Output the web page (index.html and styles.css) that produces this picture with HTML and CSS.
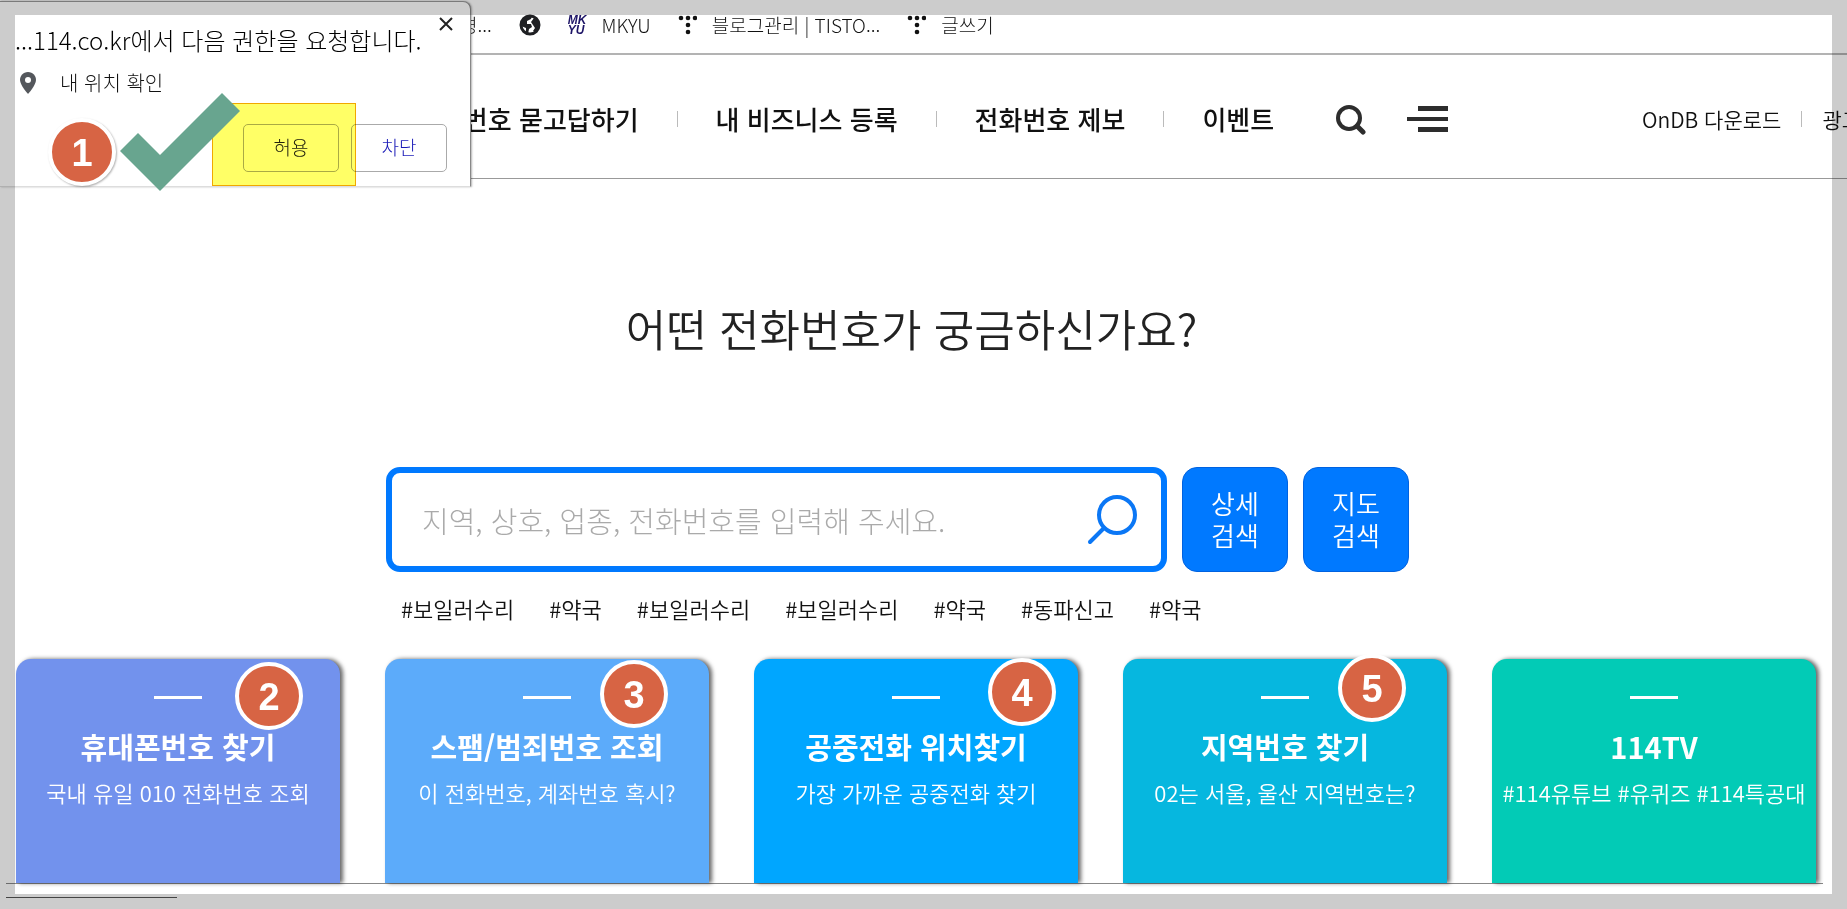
FILE: index.html
```html
<!DOCTYPE html>
<html lang="ko">
<head>
    <meta charset="UTF-8">
    <meta name="viewport" content="width=device-width, initial-scale=1.0">
    <title>114 전화번호 안내</title>
    <link rel="stylesheet" href="styles.css">
</head>
<body>
    <div class="page">
        <!-- Bookmarks -->
        <div class="bookmarks">
            <a class="bookmark" href="#">경...</a>
            <a class="bookmark" href="#" aria-label="웹사이트">
                <svg width="22" height="22" viewBox="0 0 22 22">
                    <circle cx="11" cy="11" r="9" fill="#fff" stroke="#1f2023" stroke-width="3"/>
                    <path d="M2 8 L6 3 L13 2 L12 5 L8 7 L8 10 L12 10 L13 13 L10 15 L9 20 L7 19 L7 14 L2 12 Z" fill="#1f2023"/>
                    <path d="M15 4 L20 8 L20 14 L16 18 L14 17 L16 14 L14 11 L12 8 Z" fill="#1f2023"/>
                </svg>
            </a>
            <a class="bookmark" href="#">
                <span class="mk-logo">MK<br>YU</span>
                MKYU
            </a>
            <a class="bookmark" href="#">
                <svg class="dots" width="19" height="22" viewBox="0 0 19 22">
                    <circle cx="3" cy="4" r="2.3"/><circle cx="10" cy="4" r="2.3"/><circle cx="17" cy="4" r="2.3"/>
                    <circle cx="10" cy="11" r="2.3"/><circle cx="10" cy="18" r="2.3"/>
                </svg>
                블로그관리 | TISTO...
            </a>
            <a class="bookmark" href="#">
                <svg class="dots" width="19" height="22" viewBox="0 0 19 22">
                    <circle cx="3" cy="4" r="2.3"/><circle cx="10" cy="4" r="2.3"/><circle cx="17" cy="4" r="2.3"/>
                    <circle cx="10" cy="11" r="2.3"/><circle cx="10" cy="18" r="2.3"/>
                </svg>
                글쓰기
            </a>
        </div>

        <!-- Header -->
        <header class="header">
            <nav class="nav">
                <a href="#">전화번호 묻고답하기</a>
                <span class="bar"></span>
                <a href="#">내 비즈니스 등록</a>
                <span class="bar"></span>
                <a href="#">전화번호 제보</a>
                <span class="bar"></span>
                <a href="#">이벤트</a>
            </nav>
            <div class="header-icons">
                <button class="icon-btn" type="button" aria-label="검색">
                    <svg width="32" height="32" viewBox="0 0 32 32" fill="none" stroke="#2d2d2d">
                        <circle cx="14" cy="15" r="11" stroke-width="4"/>
                        <path d="M22 23 L28 29" stroke-width="5" stroke-linecap="round"/>
                    </svg>
                </button>
                <button class="icon-btn" type="button" aria-label="전체메뉴">
                    <svg width="41" height="26" viewBox="0 0 41 26" fill="#2d2d2d">
                        <rect x="11" y="0" width="30" height="5"/>
                        <rect x="0" y="11" width="41" height="4"/>
                        <rect x="11" y="21" width="30" height="5"/>
                    </svg>
                </button>
            </div>
            <div class="util">
                <a href="#">OnDB 다운로드</a>
                <span class="bar"></span>
                <a href="#">광고</a>
            </div>
        </header>

        <!-- Search -->
        <main class="main">
            <h1 class="title">어떤 전화번호가 궁금하신가요?</h1>
            <div class="search">
                <form class="search-row">
                    <div class="search-box">
                        <input class="search-input" type="text" aria-label="검색어" placeholder="지역, 상호, 업종, 전화번호를 입력해 주세요.">
                        <button class="icon-btn" type="button" aria-label="검색">
                            <svg width="51" height="54" viewBox="0 0 51 54" fill="none" stroke="#0b77f5" stroke-width="4" stroke-linecap="round">
                                <circle cx="30" cy="22" r="18"/>
                                <path d="M17 35 L3 49"/>
                            </svg>
                        </button>
                    </div>
                    <button class="search-btn" type="button">상세<br>검색</button>
                    <button class="search-btn" type="button">지도<br>검색</button>
                </form>
                <div class="tags">
                    <a href="#">#보일러수리</a>
                    <a href="#">#약국</a>
                    <a href="#">#보일러수리</a>
                    <a href="#">#보일러수리</a>
                    <a href="#">#약국</a>
                    <a href="#">#동파신고</a>
                    <a href="#">#약국</a>
                </div>
            </div>
        </main>

        <!-- Service cards -->
        <section class="cards">
            <a class="card card-phone" href="#">
                <h2>휴대폰번호 찾기</h2>
                <p>국내 유일 010 전화번호 조회</p>
                <span class="badge">2</span>
            </a>
            <a class="card card-spam" href="#">
                <h2>스팸/범죄번호 조회</h2>
                <p>이 전화번호, 계좌번호 혹시?</p>
                <span class="badge">3</span>
            </a>
            <a class="card card-booth" href="#">
                <h2>공중전화 위치찾기</h2>
                <p>가장 가까운 공중전화 찾기</p>
                <span class="badge">4</span>
            </a>
            <a class="card card-area" href="#">
                <h2>지역번호 찾기</h2>
                <p>02는 서울, 울산 지역번호는?</p>
                <span class="badge">5</span>
            </a>
            <a class="card card-tv" href="#">
                <h2>114TV</h2>
                <p>#114유튜브 #유퀴즈 #114특공대</p>
            </a>
        </section>
        <div class="bottom-lines"></div>

        <!-- Permission popup -->
        <div class="popup">
            <button class="popup-close" type="button" aria-label="닫기">
                <svg width="14" height="14" viewBox="0 0 14 14" stroke="#222" stroke-width="2">
                    <path d="M1 1 L13 13 M13 1 L1 13"/>
                </svg>
            </button>
            <p class="popup-title">...114.co.kr에서 다음 권한을 요청합니다.</p>
            <p class="popup-item">
                <svg width="16" height="22" viewBox="0 0 16 22">
                    <path d="M8 0 C3 0 0 4 0 8 C0 13 8 22 8 22 C8 22 16 13 16 8 C16 4 13 0 8 0 Z" fill="#54575c"/>
                    <circle cx="8" cy="8" r="3" fill="#fff"/>
                </svg>
                내 위치 확인
            </p>
            <div class="popup-buttons">
                <button class="popup-btn" type="button">허용</button>
                <button class="popup-btn popup-block" type="button">차단</button>
            </div>
        </div>

        <!-- Guide marks -->
        <div class="highlight"></div>
        <svg class="check" width="120" height="98" viewBox="0 0 120 98">
            <polygon points="0,58 18,40 40,62 102,0 120,18 40,98" fill="#68a58f"/>
        </svg>
        <div class="frame"></div>
        <span class="badge badge-first">1</span>
    </div>
</body>
</html>
```
FILE: styles.css
```css
* {
    box-sizing: border-box;
}

body {
    margin: 0;
    font-family: "Noto Sans CJK KR", sans-serif;
    color: #111;
    background: #fff;
}

a {
    color: inherit;
    text-decoration: none;
}

h1, h2, p {
    margin: 0;
}

button {
    font-family: inherit;
    padding: 0;
    cursor: pointer;
}

.page {
    position: relative;
    min-height: 100vh;
    overflow: hidden;
}

/* grey see-through frame round the page */
.frame {
    position: absolute;
    inset: 0;
    border: 15px solid rgba(0, 0, 0, 0.2);
    pointer-events: none;
}

/* Bookmarks */
.bookmarks {
    display: flex;
    gap: 27px;
    height: 55px;
    padding: 11px 0 0 460px;
    border-bottom: 2px solid #b3b3b3;
    white-space: nowrap;
}

.bookmark {
    display: flex;
    align-items: center;
    gap: 15px;
    height: 27px;
    font-size: 19px;
    font-weight: 300;
}

.dots {
    fill: #111;
}

.mk-logo {
    font: italic bold 12px/10px "Liberation Sans", sans-serif;
    color: #1d1466;
}

/* Header */
.header {
    display: flex;
    align-items: center;
    height: 124px;
    padding: 5px 0 0 416px;
    border-bottom: 1px solid #999;
    white-space: nowrap;
}

.nav {
    display: flex;
    align-items: center;
    gap: 38px;
    font-size: 26px;
    font-weight: 500;
    line-height: 40px;
}

.bar {
    flex-shrink: 0;
    width: 1px;
    height: 16px;
    background: #bbb;
}

.header-icons {
    display: flex;
    align-items: center;
    gap: 40px;
    margin-left: 61px;
}

.icon-btn {
    display: flex;
    border: 0;
    background: none;
}

.util {
    display: flex;
    align-items: center;
    gap: 20px;
    width: 205px;
    margin-left: auto;
    font-size: 21px;
    font-weight: 350;
}

.util a {
    flex-shrink: 0;
}

/* Search */
.main {
    padding: 119px 24px 0 0;
}

.title {
    font-size: 44px;
    font-weight: 350;
    line-height: 60px;
    text-align: center;
    color: #222;
}

.search {
    width: 1051px;
    margin: 109px auto 0;
    padding-right: 28px;
}

.search-row {
    display: flex;
    gap: 15px;
    height: 105px;
}

.search-box {
    display: flex;
    flex: 1;
    align-items: center;
    padding: 0 23px 0 30px;
    border: 6px solid #0079ff;
    border-radius: 14px;
}

.search-input {
    flex: 1;
    min-width: 0;
    padding: 0;
    border: 0;
    outline: 0;
    background: none;
    font-family: inherit;
    font-size: 29px;
    font-weight: 300;
}

.search-input::placeholder {
    color: #aaa;
}

.search-btn {
    width: 106px;
    padding-bottom: 2px;
    border: 1px solid #0062e0;
    border-radius: 15px;
    background: #0079ff;
    color: #fff;
    font-size: 26px;
    font-weight: 350;
    line-height: 32px;
}

.tags {
    display: flex;
    gap: 35px;
    padding: 21px 15px 0;
    font-size: 22px;
    font-weight: 350;
    line-height: 30px;
    white-space: nowrap;
}

/* Cards */
.cards {
    display: grid;
    grid-template-columns: repeat(5, 1fr);
    gap: 45px;
    margin-top: 36px;
    padding: 0 31px 0 16px;
}

.card {
    position: relative;
    height: 224px;
    padding-top: 37px;
    border-radius: 15px 15px 0 0;
    box-shadow: 3px 0 4px rgba(0, 0, 0, 0.6);
    color: #fff;
    text-align: center;
    white-space: nowrap;
}

.card::before {
    content: "";
    display: block;
    width: 48px;
    height: 3px;
    margin: 0 auto 24px;
    background: #fff;
}

.card h2 {
    font-size: 29px;
    font-weight: 700;
    line-height: 46px;
}

.card p {
    font-size: 22px;
    font-weight: 350;
    line-height: 47px;
}

.card-phone {
    background: #7292ed;
}

.card-spam {
    background: #5cabfa;
}

.card-booth {
    background: #00a6ff;
}

.card-area {
    background: #06b7df;
}

.card-tv {
    background: #02cbb6;
}

/* Number badges */
.badge {
    position: absolute;
    top: 3px;
    right: 37px;
    width: 68px;
    height: 68px;
    border: 4px solid #fff;
    border-radius: 50%;
    background: #d76444;
    color: #fff;
    font: bold 38px/62px "Liberation Sans", sans-serif;
    text-align: center;
}

.card-spam .badge {
    top: 1px;
    right: 41px;
}

.card-booth .badge {
    top: -1px;
    right: 22px;
}

.card-area .badge {
    top: -5px;
    right: 41px;
}

.badge-first {
    top: 118px;
    left: 48px;
    box-shadow: 1px 1px 2px rgba(0, 0, 0, 0.3);
}

.bottom-lines {
    height: 15px;
    margin: 0 24px 0 6px;
    border-top: 1px solid #888;
    background: linear-gradient(#555, #555) left bottom / 171px 1px no-repeat;
}

/* Permission popup */
.popup {
    position: absolute;
    top: 1px;
    left: 0;
    width: 471px;
    height: 186px;
    padding: 19px 23px 0 15px;
    border-top: 1px solid #999;
    border-right: 1px solid #888;
    border-bottom: 1px solid #ddd;
    border-radius: 0 8px 0 0;
    background: #fff;
    box-shadow: 1px 0 2px rgba(0, 0, 0, 0.3);
    white-space: nowrap;
}

.popup-title {
    font-size: 24px;
    font-weight: 300;
    line-height: 38px;
    color: #000;
}

.popup-item {
    display: flex;
    align-items: center;
    gap: 24px;
    padding-left: 5px;
    font-size: 20px;
    font-weight: 300;
    line-height: 48px;
}

.popup-buttons {
    display: flex;
    justify-content: flex-end;
    gap: 12px;
    padding-top: 17px;
}

.popup-btn {
    width: 96px;
    height: 48px;
    padding-bottom: 4px;
    border: 1px solid #aaa;
    border-radius: 5px;
    background: #fff;
    color: #222;
    font-size: 19px;
    font-weight: 300;
}

.popup-block {
    color: #1a1ab8;
}

.popup-close {
    position: absolute;
    top: 15px;
    right: 17px;
    display: flex;
    border: 0;
    background: none;
}

.highlight {
    position: absolute;
    top: 103px;
    left: 212px;
    width: 144px;
    height: 83px;
    border: 1px solid #f0a800;
    background: #ffff66;
    mix-blend-mode: multiply;
    pointer-events: none;
}

.check {
    position: absolute;
    top: 93px;
    left: 120px;
}
```
